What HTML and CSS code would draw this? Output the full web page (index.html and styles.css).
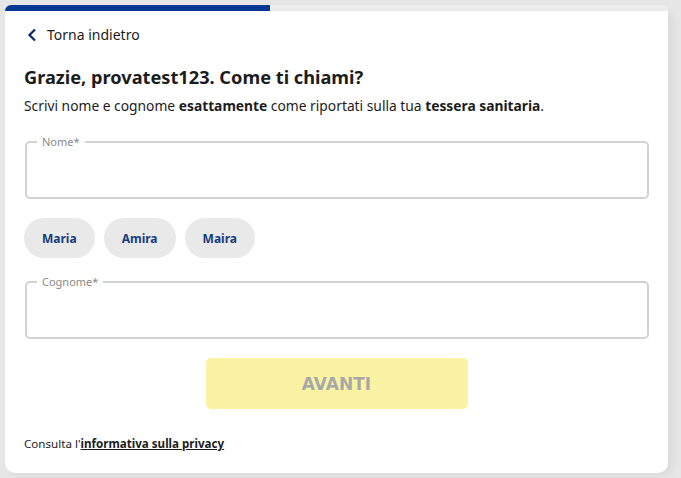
FILE: index.html
```html
<!DOCTYPE html>
<html lang="it">
<head>
<meta charset="utf-8">
<title>Come ti chiami?</title>
<link rel="stylesheet" href="styles.css">
</head>
<body>
<div class="wrap">
  <div class="progress"><div class="progress-fill" style="width:40%"></div></div>
  <main class="card">
    <a class="back" href="#">
      <svg class="back-icon" width="10" height="14" viewBox="0 0 10 14"><path d="M8 1.5 L2.5 7 L8 12.5" fill="none" stroke="#0c2d66" stroke-width="2.3"/></svg>
      <span>Torna indietro</span>
    </a>
    <h1 class="title">Grazie, provatest123. Come ti chiami?</h1>
    <p class="subtitle">Scrivi nome e cognome <strong>esattamente</strong> come riportati sulla tua <strong>tessera sanitaria</strong>.</p>

    <fieldset class="field">
      <legend class="field-label">Nome*</legend>
      <input class="field-input" type="text">
    </fieldset>

    <div class="chips">
      <button class="chip">Maria</button>
      <button class="chip">Amira</button>
      <button class="chip">Maira</button>
    </div>

    <fieldset class="field">
      <legend class="field-label">Cognome*</legend>
      <input class="field-input" type="text">
    </fieldset>

    <div class="actions">
      <button class="next" disabled>AVANTI</button>
    </div>

    <p class="privacy">Consulta l'<a href="#">informativa sulla privacy</a></p>
  </main>
</div>
</body>
</html>
```

FILE: styles.css
```css
html, body {
  margin: 0;
  padding: 0;
}
body {
  background: #e6e6e6;
  font-family: "Noto Sans", "Open Sans", sans-serif;
  color: #1c1c1c;
  height: 478px;
  overflow: hidden;
}
.wrap {
  margin: 5px 13px 0 5px;
}
.progress {
  height: 6px;
  background: #eeeeee;
  border-radius: 10px 10px 0 0;
  overflow: hidden;
}
.progress-fill {
  height: 100%;
  background: #063a96;
}
.card {
  background: #fff;
  border-radius: 0 0 10px 10px;
  padding: 14px 19px 0 19px;
  box-shadow: 4px 2px 8px rgba(0,0,0,0.06);
  height: 462px;
  box-sizing: border-box;
}
.back {
  display: inline-flex;
  align-items: center;
  gap: 10px;
  text-decoration: none;
  color: #1c1c1c;
  font-size: 14px;
  line-height: 20px;
  margin-left: 3px;
}
.title {
  margin: 18px 0 0 0;
  font-size: 18.2px;
  line-height: 24px;
  font-weight: 700;
}
.subtitle {
  margin: 7px 0 0 0;
  font-size: 13.8px;
  line-height: 20px;
}
.subtitle strong { font-weight: 700; }
.field {
  margin: 19px 0 0 1px;
  padding: 0 8px;
  border: 2px solid #d2d2d2;
  border-radius: 5px;
  height: 64px;
  box-sizing: border-box;
  min-width: 0;
}
.field-label {
  font-size: 11px;
  color: #8a8a8a;
  padding: 0 5px;
  margin-left: 2px;
  line-height: 14px;
}
.field-input {
  border: none;
  outline: none;
  width: 100%;
  font: inherit;
  height: 36px;
  background: transparent;
}
.chips {
  display: flex;
  gap: 9px;
  margin-top: 19px;
}
.chip {
  border: none;
  background: #e9e9e9;
  color: #173c80;
  font-family: inherit;
  font-weight: 700;
  font-size: 12px;
  height: 40px;
  padding: 0 18px;
  border-radius: 20px;
}
.chips + .field { margin-top: 17px; }
.actions {
  display: flex;
  justify-content: center;
  margin-top: 19px;
}
.next {
  width: 262px;
  height: 51px;
  border: none;
  border-radius: 5px;
  background: #faf3a4;
  color: #a8a8a8;
  font-family: "DejaVu Sans", sans-serif;
  font-weight: 700;
  font-size: 17px;
}
.privacy {
  margin: 28px 0 0 0;
  font-size: 11.6px;
  line-height: 14px;
}
.privacy a {
  color: #1c1c1c;
  font-weight: 700;
  text-decoration: underline;
}
```
